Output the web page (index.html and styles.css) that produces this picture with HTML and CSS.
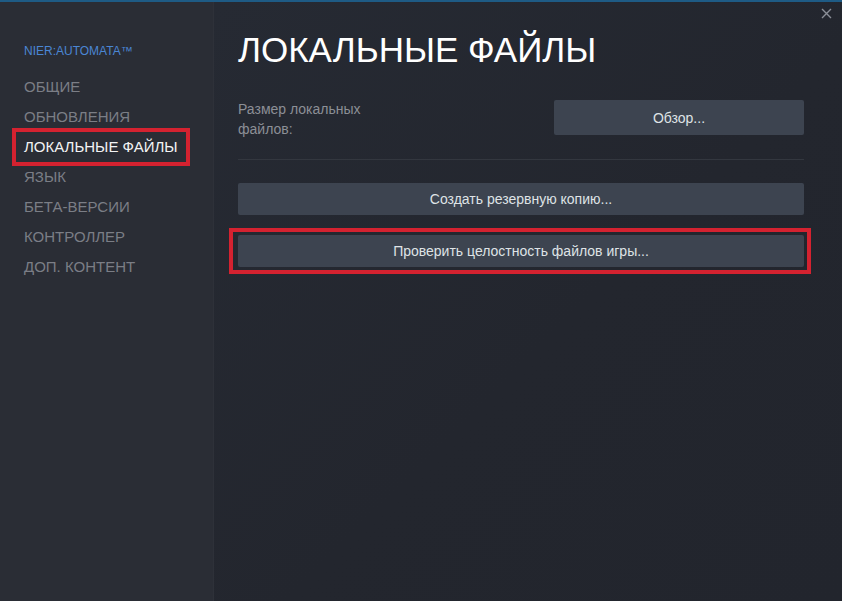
FILE: index.html
```html
<!DOCTYPE html>
<html lang="ru">
<head>
    <meta charset="UTF-8">
    <title>Свойства: NIER:AUTOMATA</title>
    <link rel="stylesheet" href="styles.css">
</head>
<body>

<div class="window">
    <div class="sidebar">
        <div class="game-title">NIER:AUTOMATA™</div>
        <ul class="nav">
            <li>ОБЩИЕ</li>
            <li>ОБНОВЛЕНИЯ</li>
            <li class="active"><span class="mark">ЛОКАЛЬНЫЕ ФАЙЛЫ</span></li>
            <li>ЯЗЫК</li>
            <li>БЕТА-ВЕРСИИ</li>
            <li>КОНТРОЛЛЕР</li>
            <li>ДОП. КОНТЕНТ</li>
        </ul>
    </div>

    <div class="main">
        <button class="close" title="Закрыть">
            <svg width="11" height="11" viewBox="0 0 11 11">
                <path d="M1 1L10 10M10 1L1 10" stroke="#8b8f97" stroke-width="1.4" fill="none"/>
            </svg>
        </button>

        <h1>ЛОКАЛЬНЫЕ ФАЙЛЫ</h1>

        <div class="size-row">
            <div class="size-label">Размер локальных<br>файлов:</div>
            <button class="btn browse">Обзор...</button>
        </div>

        <div class="actions">
            <button class="btn">Создать резервную копию...</button>
            <div class="mark-wide">
                <button class="btn">Проверить целостность файлов игры...</button>
            </div>
        </div>
    </div>
</div>

</body>
</html>
```

FILE: styles.css
```css
html, body {
    margin: 0;
    height: 100%;
}
body {
    font-family: Arial, "Liberation Sans", sans-serif;
    background: #23262e;
    color: #dcdedf;
}
.window {
    display: flex;
    height: 601px;
    border-top: 2px solid #1e5b85;
    box-sizing: border-box;
}

/* left column */
.sidebar {
    width: 214px;
    flex-shrink: 0;
    background: #2a2d35;
    padding: 42px 0 0 24px;
    box-sizing: border-box;
    border-right: 1px solid #2e3139;
}
.game-title {
    color: #4a86d4;
    font-size: 12px;
    margin-bottom: 14px;
}
.nav {
    list-style: none;
    margin: 0;
    padding: 0;
}
.nav li {
    font-size: 15px;
    line-height: 30px;
    color: #7b7e86;
}
.nav li.active {
    color: #f2f3f4;
    margin-left: -12px;
}
.nav .mark {
    display: inline-block;
    border: 4px solid #d42230;
    padding: 0 8px;
    line-height: 30px;
    margin: -4px 0;
}

/* right column */
.main {
    position: relative;
    flex: 1;
    padding: 28px 38px 0 24px;
    background: linear-gradient(135deg, #262a33 0%, #23262e 55%, #22252d 100%);
}
.close {
    position: absolute;
    top: 5px;
    right: 10px;
    background: none;
    border: none;
    padding: 0;
    cursor: pointer;
}
h1 {
    margin: 0 0 30px;
    font-size: 35px;
    font-weight: normal;
    letter-spacing: 0;
    color: #ffffff;
}
.size-row {
    display: flex;
    justify-content: space-between;
    align-items: flex-start;
    padding-bottom: 20px;
    border-bottom: 1px solid #33373f;
}
.size-label {
    font-size: 14px;
    line-height: 20px;
    color: #8c8f96;
    margin-top: -1px;
}
.btn {
    display: block;
    width: 100%;
    height: 32px;
    background: #3d4450;
    border: none;
    border-radius: 2px;
    color: #dfe3e6;
    font-family: inherit;
    font-size: 14px;
    cursor: pointer;
}
.btn.browse {
    width: 250px;
    height: 35px;
}
.actions {
    padding-top: 23px;
}
.mark-wide {
    margin: 13px -7px 0 -9px;
    border: 4px solid #d42230;
    padding: 3px 3px 3px 5px;
}
```
